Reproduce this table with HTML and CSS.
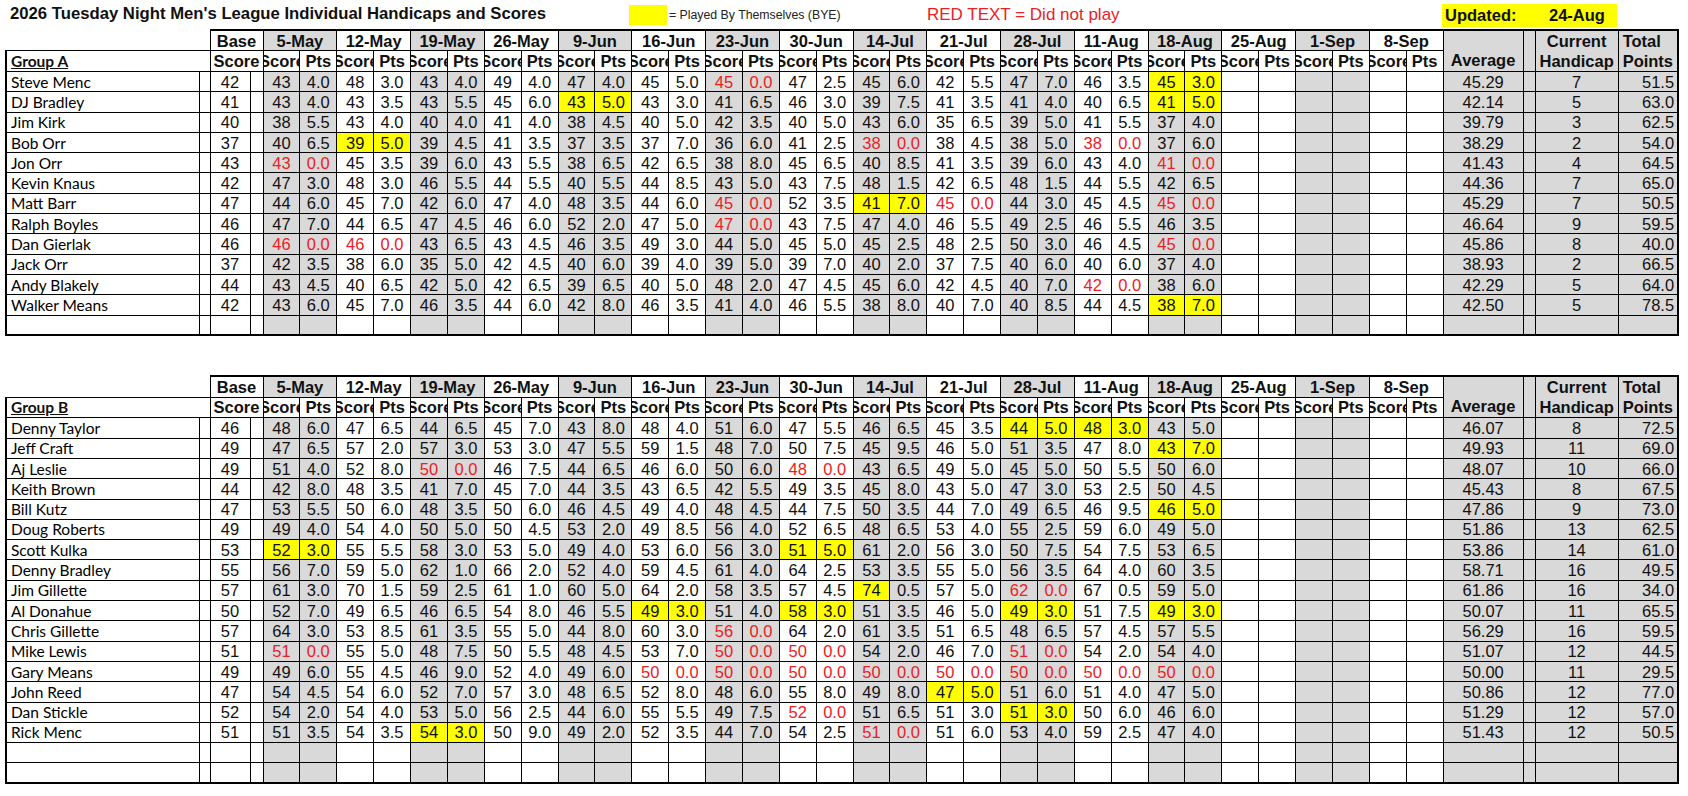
FILE: index.html
```html
<!DOCTYPE html>
<html lang="en">
<head>
<meta charset="utf-8">
<title>2026 Tuesday Night Men's League</title>
<link rel="stylesheet" href="styles.css">
</head>
<body>
<div class="top">
  <div class="title">2026 Tuesday Night Men's League Individual Handicaps and Scores</div>
  <div class="legend"><span class="swatch"></span><span>= Played By Themselves (BYE)</span></div>
  <div class="red-note">RED TEXT = Did not play</div>
  <div class="updated"><span class="upd-label">Updated:</span><span>24-Aug</span></div>
</div>

<table class="sheet">
<colgroup><col class="c-name"><col class="c-nar"><col class="c-base"><col class="c-gap"><col span="32" class="c-d"><col class="c-avg"><col class="c-gap2"><col class="c-hc"><col class="c-tot"></colgroup>
<tr class="h1"><th class="e" colspan="2"></th><th colspan="2">Base</th><th class="g" colspan="2">5-May</th><th colspan="2">12-May</th><th class="g" colspan="2">19-May</th><th colspan="2">26-May</th><th class="g" colspan="2">9-Jun</th><th colspan="2">16-Jun</th><th class="g" colspan="2">23-Jun</th><th colspan="2">30-Jun</th><th class="g" colspan="2">14-Jul</th><th colspan="2">21-Jul</th><th class="g" colspan="2">28-Jul</th><th colspan="2">11-Aug</th><th class="g" colspan="2">18-Aug</th><th colspan="2">25-Aug</th><th class="g" colspan="2">1-Sep</th><th colspan="2">8-Sep</th><th class="g avg" rowspan="2">Average</th><th class="g" rowspan="2"></th><th class="g" rowspan="2">Current<br>Handicap</th><th class="g tot" rowspan="2">Total<br>Points</th></tr>
<tr class="h2"><th class="grp" colspan="2">Group A</th><th colspan="2">Score</th><th>Score</th><th>Pts</th><th>Score</th><th>Pts</th><th>Score</th><th>Pts</th><th>Score</th><th>Pts</th><th>Score</th><th>Pts</th><th>Score</th><th>Pts</th><th>Score</th><th>Pts</th><th>Score</th><th>Pts</th><th>Score</th><th>Pts</th><th>Score</th><th>Pts</th><th>Score</th><th>Pts</th><th>Score</th><th>Pts</th><th>Score</th><th>Pts</th><th>Score</th><th>Pts</th><th>Score</th><th>Pts</th><th>Score</th><th>Pts</th></tr>
<tr class="d"><td>Steve Menc</td><td></td><td>42</td><td></td><td>43</td><td>4.0</td><td>48</td><td>3.0</td><td>43</td><td>4.0</td><td>49</td><td>4.0</td><td>47</td><td>4.0</td><td>45</td><td>5.0</td><td class="r">45</td><td class="r">0.0</td><td>47</td><td>2.5</td><td>45</td><td>6.0</td><td>42</td><td>5.5</td><td>47</td><td>7.0</td><td>46</td><td>3.5</td><td class="y">45</td><td class="y">3.0</td><td></td><td></td><td></td><td></td><td></td><td></td><td>45.29</td><td></td><td>7</td><td>51.5</td></tr>
<tr class="d"><td>DJ Bradley</td><td></td><td>41</td><td></td><td>43</td><td>4.0</td><td>43</td><td>3.5</td><td>43</td><td>5.5</td><td>45</td><td>6.0</td><td class="y">43</td><td class="y">5.0</td><td>43</td><td>3.0</td><td>41</td><td>6.5</td><td>46</td><td>3.0</td><td>39</td><td>7.5</td><td>41</td><td>3.5</td><td>41</td><td>4.0</td><td>40</td><td>6.5</td><td class="y">41</td><td class="y">5.0</td><td></td><td></td><td></td><td></td><td></td><td></td><td>42.14</td><td></td><td>5</td><td>63.0</td></tr>
<tr class="d"><td>Jim Kirk</td><td></td><td>40</td><td></td><td>38</td><td>5.5</td><td>43</td><td>4.0</td><td>40</td><td>4.0</td><td>41</td><td>4.0</td><td>38</td><td>4.5</td><td>40</td><td>5.0</td><td>42</td><td>3.5</td><td>40</td><td>5.0</td><td>43</td><td>6.0</td><td>35</td><td>6.5</td><td>39</td><td>5.0</td><td>41</td><td>5.5</td><td>37</td><td>4.0</td><td></td><td></td><td></td><td></td><td></td><td></td><td>39.79</td><td></td><td>3</td><td>62.5</td></tr>
<tr class="d"><td>Bob Orr</td><td></td><td>37</td><td></td><td>40</td><td>6.5</td><td class="y">39</td><td class="y">5.0</td><td>39</td><td>4.5</td><td>41</td><td>3.5</td><td>37</td><td>3.5</td><td>37</td><td>7.0</td><td>36</td><td>6.0</td><td>41</td><td>2.5</td><td class="r">38</td><td class="r">0.0</td><td>38</td><td>4.5</td><td>38</td><td>5.0</td><td class="r">38</td><td class="r">0.0</td><td>37</td><td>6.0</td><td></td><td></td><td></td><td></td><td></td><td></td><td>38.29</td><td></td><td>2</td><td>54.0</td></tr>
<tr class="d"><td>Jon Orr</td><td></td><td>43</td><td></td><td class="r">43</td><td class="r">0.0</td><td>45</td><td>3.5</td><td>39</td><td>6.0</td><td>43</td><td>5.5</td><td>38</td><td>6.5</td><td>42</td><td>6.5</td><td>38</td><td>8.0</td><td>45</td><td>6.5</td><td>40</td><td>8.5</td><td>41</td><td>3.5</td><td>39</td><td>6.0</td><td>43</td><td>4.0</td><td class="r">41</td><td class="r">0.0</td><td></td><td></td><td></td><td></td><td></td><td></td><td>41.43</td><td></td><td>4</td><td>64.5</td></tr>
<tr class="d"><td>Kevin Knaus</td><td></td><td>42</td><td></td><td>47</td><td>3.0</td><td>48</td><td>3.0</td><td>46</td><td>5.5</td><td>44</td><td>5.5</td><td>40</td><td>5.5</td><td>44</td><td>8.5</td><td>43</td><td>5.0</td><td>43</td><td>7.5</td><td>48</td><td>1.5</td><td>42</td><td>6.5</td><td>48</td><td>1.5</td><td>44</td><td>5.5</td><td>42</td><td>6.5</td><td></td><td></td><td></td><td></td><td></td><td></td><td>44.36</td><td></td><td>7</td><td>65.0</td></tr>
<tr class="d"><td>Matt Barr</td><td></td><td>47</td><td></td><td>44</td><td>6.0</td><td>45</td><td>7.0</td><td>42</td><td>6.0</td><td>47</td><td>4.0</td><td>48</td><td>3.5</td><td>44</td><td>6.0</td><td class="r">45</td><td class="r">0.0</td><td>52</td><td>3.5</td><td class="y">41</td><td class="y">7.0</td><td class="r">45</td><td class="r">0.0</td><td>44</td><td>3.0</td><td>45</td><td>4.5</td><td class="r">45</td><td class="r">0.0</td><td></td><td></td><td></td><td></td><td></td><td></td><td>45.29</td><td></td><td>7</td><td>50.5</td></tr>
<tr class="d"><td>Ralph Boyles</td><td></td><td>46</td><td></td><td>47</td><td>7.0</td><td>44</td><td>6.5</td><td>47</td><td>4.5</td><td>46</td><td>6.0</td><td>52</td><td>2.0</td><td>47</td><td>5.0</td><td class="r">47</td><td class="r">0.0</td><td>43</td><td>7.5</td><td>47</td><td>4.0</td><td>46</td><td>5.5</td><td>49</td><td>2.5</td><td>46</td><td>5.5</td><td>46</td><td>3.5</td><td></td><td></td><td></td><td></td><td></td><td></td><td>46.64</td><td></td><td>9</td><td>59.5</td></tr>
<tr class="d"><td>Dan Gierlak</td><td></td><td>46</td><td></td><td class="r">46</td><td class="r">0.0</td><td class="r">46</td><td class="r">0.0</td><td>43</td><td>6.5</td><td>43</td><td>4.5</td><td>46</td><td>3.5</td><td>49</td><td>3.0</td><td>44</td><td>5.0</td><td>45</td><td>5.0</td><td>45</td><td>2.5</td><td>48</td><td>2.5</td><td>50</td><td>3.0</td><td>46</td><td>4.5</td><td class="r">45</td><td class="r">0.0</td><td></td><td></td><td></td><td></td><td></td><td></td><td>45.86</td><td></td><td>8</td><td>40.0</td></tr>
<tr class="d"><td>Jack Orr</td><td></td><td>37</td><td></td><td>42</td><td>3.5</td><td>38</td><td>6.0</td><td>35</td><td>5.0</td><td>42</td><td>4.5</td><td>40</td><td>6.0</td><td>39</td><td>4.0</td><td>39</td><td>5.0</td><td>39</td><td>7.0</td><td>40</td><td>2.0</td><td>37</td><td>7.5</td><td>40</td><td>6.0</td><td>40</td><td>6.0</td><td>37</td><td>4.0</td><td></td><td></td><td></td><td></td><td></td><td></td><td>38.93</td><td></td><td>2</td><td>66.5</td></tr>
<tr class="d"><td>Andy Blakely</td><td></td><td>44</td><td></td><td>43</td><td>4.5</td><td>40</td><td>6.5</td><td>42</td><td>5.0</td><td>42</td><td>6.5</td><td>39</td><td>6.5</td><td>40</td><td>5.0</td><td>48</td><td>2.0</td><td>47</td><td>4.5</td><td>45</td><td>6.0</td><td>42</td><td>4.5</td><td>40</td><td>7.0</td><td class="r">42</td><td class="r">0.0</td><td>38</td><td>6.0</td><td></td><td></td><td></td><td></td><td></td><td></td><td>42.29</td><td></td><td>5</td><td>64.0</td></tr>
<tr class="d"><td>Walker Means</td><td></td><td>42</td><td></td><td>43</td><td>6.0</td><td>45</td><td>7.0</td><td>46</td><td>3.5</td><td>44</td><td>6.0</td><td>42</td><td>8.0</td><td>46</td><td>3.5</td><td>41</td><td>4.0</td><td>46</td><td>5.5</td><td>38</td><td>8.0</td><td>40</td><td>7.0</td><td>40</td><td>8.5</td><td>44</td><td>4.5</td><td class="y">38</td><td class="y">7.0</td><td></td><td></td><td></td><td></td><td></td><td></td><td>42.50</td><td></td><td>5</td><td>78.5</td></tr>
<tr class="d"><td></td><td></td><td></td><td></td><td></td><td></td><td></td><td></td><td></td><td></td><td></td><td></td><td></td><td></td><td></td><td></td><td></td><td></td><td></td><td></td><td></td><td></td><td></td><td></td><td></td><td></td><td></td><td></td><td></td><td></td><td></td><td></td><td></td><td></td><td></td><td></td><td></td><td></td><td></td><td></td></tr>
</table>

<table class="sheet sheet2">
<colgroup><col class="c-name"><col class="c-nar"><col class="c-base"><col class="c-gap"><col span="32" class="c-d"><col class="c-avg"><col class="c-gap2"><col class="c-hc"><col class="c-tot"></colgroup>
<tr class="h1"><th class="e" colspan="2"></th><th colspan="2">Base</th><th class="g" colspan="2">5-May</th><th colspan="2">12-May</th><th class="g" colspan="2">19-May</th><th colspan="2">26-May</th><th class="g" colspan="2">9-Jun</th><th colspan="2">16-Jun</th><th class="g" colspan="2">23-Jun</th><th colspan="2">30-Jun</th><th class="g" colspan="2">14-Jul</th><th colspan="2">21-Jul</th><th class="g" colspan="2">28-Jul</th><th colspan="2">11-Aug</th><th class="g" colspan="2">18-Aug</th><th colspan="2">25-Aug</th><th class="g" colspan="2">1-Sep</th><th colspan="2">8-Sep</th><th class="g avg" rowspan="2">Average</th><th class="g" rowspan="2"></th><th class="g" rowspan="2">Current<br>Handicap</th><th class="g tot" rowspan="2">Total<br>Points</th></tr>
<tr class="h2"><th class="grp" colspan="2">Group B</th><th colspan="2">Score</th><th>Score</th><th>Pts</th><th>Score</th><th>Pts</th><th>Score</th><th>Pts</th><th>Score</th><th>Pts</th><th>Score</th><th>Pts</th><th>Score</th><th>Pts</th><th>Score</th><th>Pts</th><th>Score</th><th>Pts</th><th>Score</th><th>Pts</th><th>Score</th><th>Pts</th><th>Score</th><th>Pts</th><th>Score</th><th>Pts</th><th>Score</th><th>Pts</th><th>Score</th><th>Pts</th><th>Score</th><th>Pts</th><th>Score</th><th>Pts</th></tr>
<tr class="d"><td>Denny Taylor</td><td></td><td>46</td><td></td><td>48</td><td>6.0</td><td>47</td><td>6.5</td><td>44</td><td>6.5</td><td>45</td><td>7.0</td><td>43</td><td>8.0</td><td>48</td><td>4.0</td><td>51</td><td>6.0</td><td>47</td><td>5.5</td><td>46</td><td>6.5</td><td>45</td><td>3.5</td><td class="y">44</td><td class="y">5.0</td><td class="y">48</td><td class="y">3.0</td><td>43</td><td>5.0</td><td></td><td></td><td></td><td></td><td></td><td></td><td>46.07</td><td></td><td>8</td><td>72.5</td></tr>
<tr class="d"><td>Jeff Craft</td><td></td><td>49</td><td></td><td>47</td><td>6.5</td><td>57</td><td>2.0</td><td>57</td><td>3.0</td><td>53</td><td>3.0</td><td>47</td><td>5.5</td><td>59</td><td>1.5</td><td>48</td><td>7.0</td><td>50</td><td>7.5</td><td>45</td><td>9.5</td><td>46</td><td>5.0</td><td>51</td><td>3.5</td><td>47</td><td>8.0</td><td class="y">43</td><td class="y">7.0</td><td></td><td></td><td></td><td></td><td></td><td></td><td>49.93</td><td></td><td>11</td><td>69.0</td></tr>
<tr class="d"><td>Aj Leslie</td><td></td><td>49</td><td></td><td>51</td><td>4.0</td><td>52</td><td>8.0</td><td class="r">50</td><td class="r">0.0</td><td>46</td><td>7.5</td><td>44</td><td>6.5</td><td>46</td><td>6.0</td><td>50</td><td>6.0</td><td class="r">48</td><td class="r">0.0</td><td>43</td><td>6.5</td><td>49</td><td>5.0</td><td>45</td><td>5.0</td><td>50</td><td>5.5</td><td>50</td><td>6.0</td><td></td><td></td><td></td><td></td><td></td><td></td><td>48.07</td><td></td><td>10</td><td>66.0</td></tr>
<tr class="d"><td>Keith Brown</td><td></td><td>44</td><td></td><td>42</td><td>8.0</td><td>48</td><td>3.5</td><td>41</td><td>7.0</td><td>45</td><td>7.0</td><td>44</td><td>3.5</td><td>43</td><td>6.5</td><td>42</td><td>5.5</td><td>49</td><td>3.5</td><td>45</td><td>8.0</td><td>43</td><td>5.0</td><td>47</td><td>3.0</td><td>53</td><td>2.5</td><td>50</td><td>4.5</td><td></td><td></td><td></td><td></td><td></td><td></td><td>45.43</td><td></td><td>8</td><td>67.5</td></tr>
<tr class="d"><td>Bill Kutz</td><td></td><td>47</td><td></td><td>53</td><td>5.5</td><td>50</td><td>6.0</td><td>48</td><td>3.5</td><td>50</td><td>6.0</td><td>46</td><td>4.5</td><td>49</td><td>4.0</td><td>48</td><td>4.5</td><td>44</td><td>7.5</td><td>50</td><td>3.5</td><td>44</td><td>7.0</td><td>49</td><td>6.5</td><td>46</td><td>9.5</td><td class="y">46</td><td class="y">5.0</td><td></td><td></td><td></td><td></td><td></td><td></td><td>47.86</td><td></td><td>9</td><td>73.0</td></tr>
<tr class="d"><td>Doug Roberts</td><td></td><td>49</td><td></td><td>49</td><td>4.0</td><td>54</td><td>4.0</td><td>50</td><td>5.0</td><td>50</td><td>4.5</td><td>53</td><td>2.0</td><td>49</td><td>8.5</td><td>56</td><td>4.0</td><td>52</td><td>6.5</td><td>48</td><td>6.5</td><td>53</td><td>4.0</td><td>55</td><td>2.5</td><td>59</td><td>6.0</td><td>49</td><td>5.0</td><td></td><td></td><td></td><td></td><td></td><td></td><td>51.86</td><td></td><td>13</td><td>62.5</td></tr>
<tr class="d"><td>Scott Kulka</td><td></td><td>53</td><td></td><td class="y">52</td><td class="y">3.0</td><td>55</td><td>5.5</td><td>58</td><td>3.0</td><td>53</td><td>5.0</td><td>49</td><td>4.0</td><td>53</td><td>6.0</td><td>56</td><td>3.0</td><td class="y">51</td><td class="y">5.0</td><td>61</td><td>2.0</td><td>56</td><td>3.0</td><td>50</td><td>7.5</td><td>54</td><td>7.5</td><td>53</td><td>6.5</td><td></td><td></td><td></td><td></td><td></td><td></td><td>53.86</td><td></td><td>14</td><td>61.0</td></tr>
<tr class="d"><td>Denny Bradley</td><td></td><td>55</td><td></td><td>56</td><td>7.0</td><td>59</td><td>5.0</td><td>62</td><td>1.0</td><td>66</td><td>2.0</td><td>52</td><td>4.0</td><td>59</td><td>4.5</td><td>61</td><td>4.0</td><td>64</td><td>2.5</td><td>53</td><td>3.5</td><td>55</td><td>5.0</td><td>56</td><td>3.5</td><td>64</td><td>4.0</td><td>60</td><td>3.5</td><td></td><td></td><td></td><td></td><td></td><td></td><td>58.71</td><td></td><td>16</td><td>49.5</td></tr>
<tr class="d"><td>Jim Gillette</td><td></td><td>57</td><td></td><td>61</td><td>3.0</td><td>70</td><td>1.5</td><td>59</td><td>2.5</td><td>61</td><td>1.0</td><td>60</td><td>5.0</td><td>64</td><td>2.0</td><td>58</td><td>3.5</td><td>57</td><td>4.5</td><td class="y">74</td><td>0.5</td><td>57</td><td>5.0</td><td class="r">62</td><td class="r">0.0</td><td>67</td><td>0.5</td><td>59</td><td>5.0</td><td></td><td></td><td></td><td></td><td></td><td></td><td>61.86</td><td></td><td>16</td><td>34.0</td></tr>
<tr class="d"><td>Al Donahue</td><td></td><td>50</td><td></td><td>52</td><td>7.0</td><td>49</td><td>6.5</td><td>46</td><td>6.5</td><td>54</td><td>8.0</td><td>46</td><td>5.5</td><td class="y">49</td><td class="y">3.0</td><td>51</td><td>4.0</td><td class="y">58</td><td class="y">3.0</td><td>51</td><td>3.5</td><td>46</td><td>5.0</td><td class="y">49</td><td class="y">3.0</td><td>51</td><td>7.5</td><td class="y">49</td><td class="y">3.0</td><td></td><td></td><td></td><td></td><td></td><td></td><td>50.07</td><td></td><td>11</td><td>65.5</td></tr>
<tr class="d"><td>Chris Gillette</td><td></td><td>57</td><td></td><td>64</td><td>3.0</td><td>53</td><td>8.5</td><td>61</td><td>3.5</td><td>55</td><td>5.0</td><td>44</td><td>8.0</td><td>60</td><td>3.0</td><td class="r">56</td><td class="r">0.0</td><td>64</td><td>2.0</td><td>61</td><td>3.5</td><td>51</td><td>6.5</td><td>48</td><td>6.5</td><td>57</td><td>4.5</td><td>57</td><td>5.5</td><td></td><td></td><td></td><td></td><td></td><td></td><td>56.29</td><td></td><td>16</td><td>59.5</td></tr>
<tr class="d"><td>Mike Lewis</td><td></td><td>51</td><td></td><td class="r">51</td><td class="r">0.0</td><td>55</td><td>5.0</td><td>48</td><td>7.5</td><td>50</td><td>5.5</td><td>48</td><td>4.5</td><td>53</td><td>7.0</td><td class="r">50</td><td class="r">0.0</td><td class="r">50</td><td class="r">0.0</td><td>54</td><td>2.0</td><td>46</td><td>7.0</td><td class="r">51</td><td class="r">0.0</td><td>54</td><td>2.0</td><td>54</td><td>4.0</td><td></td><td></td><td></td><td></td><td></td><td></td><td>51.07</td><td></td><td>12</td><td>44.5</td></tr>
<tr class="d"><td>Gary Means</td><td></td><td>49</td><td></td><td>49</td><td>6.0</td><td>55</td><td>4.5</td><td>46</td><td>9.0</td><td>52</td><td>4.0</td><td>49</td><td>6.0</td><td class="r">50</td><td class="r">0.0</td><td class="r">50</td><td class="r">0.0</td><td class="r">50</td><td class="r">0.0</td><td class="r">50</td><td class="r">0.0</td><td class="r">50</td><td class="r">0.0</td><td class="r">50</td><td class="r">0.0</td><td class="r">50</td><td class="r">0.0</td><td class="r">50</td><td class="r">0.0</td><td></td><td></td><td></td><td></td><td></td><td></td><td>50.00</td><td></td><td>11</td><td>29.5</td></tr>
<tr class="d"><td>John Reed</td><td></td><td>47</td><td></td><td>54</td><td>4.5</td><td>54</td><td>6.0</td><td>52</td><td>7.0</td><td>57</td><td>3.0</td><td>48</td><td>6.5</td><td>52</td><td>8.0</td><td>48</td><td>6.0</td><td>55</td><td>8.0</td><td>49</td><td>8.0</td><td class="y">47</td><td class="y">5.0</td><td>51</td><td>6.0</td><td>51</td><td>4.0</td><td>47</td><td>5.0</td><td></td><td></td><td></td><td></td><td></td><td></td><td>50.86</td><td></td><td>12</td><td>77.0</td></tr>
<tr class="d"><td>Dan Stickle</td><td></td><td>52</td><td></td><td>54</td><td>2.0</td><td>54</td><td>4.0</td><td>53</td><td>5.0</td><td>56</td><td>2.5</td><td>44</td><td>6.0</td><td>55</td><td>5.5</td><td>49</td><td>7.5</td><td class="r">52</td><td class="r">0.0</td><td>51</td><td>6.5</td><td>51</td><td>3.0</td><td class="y">51</td><td class="y">3.0</td><td>50</td><td>6.0</td><td>46</td><td>6.0</td><td></td><td></td><td></td><td></td><td></td><td></td><td>51.29</td><td></td><td>12</td><td>57.0</td></tr>
<tr class="d"><td>Rick Menc</td><td></td><td>51</td><td></td><td>51</td><td>3.5</td><td>54</td><td>3.5</td><td class="y">54</td><td class="y">3.0</td><td>50</td><td>9.0</td><td>49</td><td>2.0</td><td>52</td><td>3.5</td><td>44</td><td>7.0</td><td>54</td><td>2.5</td><td class="r">51</td><td class="r">0.0</td><td>51</td><td>6.0</td><td>53</td><td>4.0</td><td>59</td><td>2.5</td><td>47</td><td>4.0</td><td></td><td></td><td></td><td></td><td></td><td></td><td>51.43</td><td></td><td>12</td><td>50.5</td></tr>
<tr class="d"><td></td><td></td><td></td><td></td><td></td><td></td><td></td><td></td><td></td><td></td><td></td><td></td><td></td><td></td><td></td><td></td><td></td><td></td><td></td><td></td><td></td><td></td><td></td><td></td><td></td><td></td><td></td><td></td><td></td><td></td><td></td><td></td><td></td><td></td><td></td><td></td><td></td><td></td><td></td><td></td></tr>
<tr class="d"><td></td><td></td><td></td><td></td><td></td><td></td><td></td><td></td><td></td><td></td><td></td><td></td><td></td><td></td><td></td><td></td><td></td><td></td><td></td><td></td><td></td><td></td><td></td><td></td><td></td><td></td><td></td><td></td><td></td><td></td><td></td><td></td><td></td><td></td><td></td><td></td><td></td><td></td><td></td><td></td></tr>
</table>
</body>
</html>
```

FILE: styles.css
```css
html, body {
  margin: 0;
  padding: 0;
  background: #ffffff;
}

body {
  font-family: "Liberation Sans", Arial, sans-serif;
  color: #000000;
  width: 1688px;
  height: 796px;
  overflow: hidden;
}

/* ---------- top strip ---------- */
.top {
  display: flex;
  align-items: flex-start;
  height: 29px;
}

.title {
  box-sizing: border-box;
  width: 629px;
  padding: 4px 0 0 10px;
  font-size: 16.7px;
  font-weight: bold;
  line-height: 20px;
  white-space: nowrap;
  color: #111;
}

.legend {
  display: flex;
  align-items: center;
  width: 298px;
  margin-top: 5px;
  font-size: 12.3px;
  line-height: 20px;
  color: #222;
}

.swatch {
  width: 38px;
  height: 20px;
  margin-right: 2px;
  background: #ffff00;
}

.red-note {
  width: 515px;
  padding-top: 5px;
  font-size: 17px;
  line-height: 20px;
  color: #ec2024;
  white-space: nowrap;
}

.updated {
  display: flex;
  box-sizing: border-box;
  width: 175px;
  height: 23px;
  margin-top: 4px;
  padding-left: 3px;
  background: #ffff00;
  font-size: 16.5px;
  font-weight: bold;
  line-height: 23px;
  color: #111;
}

.upd-label {
  width: 104px;
}

/* ---------- sheet tables ---------- */
.sheet {
  margin-left: 5px;
  border-collapse: collapse;
  table-layout: fixed;
  width: 1672px;
  border: 2px solid #000;
}

.sheet2 {
  margin-top: 39px;
}

.c-name { width: 193px; }
.c-nar  { width: 11px; }
.c-base { width: 40px; }
.c-gap  { width: 13px; }
.c-d    { width: 36.875px; }
.c-avg  { width: 80px; }
.c-gap2 { width: 12px; }
.c-hc   { width: 83px; }
.c-tot  { width: 60px; }

.sheet tr {
  height: 20.3px;
}

.sheet th,
.sheet td {
  border: 1px solid #000;
  padding: 0;
  font-size: 16.5px;
  line-height: 18px;
  text-align: center;
  vertical-align: middle;
  white-space: nowrap;
  overflow: hidden;
}

.sheet th {
  font-weight: bold;
  color: #111;
  background: #ffffff;
}

.sheet th.g {
  background: #d9d9d9;
}

.sheet th.e {
  border-top: hidden;
  border-left: hidden;
}

.sheet th.avg {
  vertical-align: bottom;
  padding-bottom: 1px;
}

.sheet th.tot {
  text-align: left;
  padding-left: 4px;
}

.sheet .h1 th[rowspan] {
  line-height: 20px;
}

.sheet th.grp {
  text-align: left;
  padding-left: 4px;
  font-family: Lato, "Noto Sans", sans-serif;
  font-size: 15.5px;
  text-decoration: underline;
}

/* clipped "Score" headers, overflowing on both sides */
.sheet .h2 th:nth-child(2n+3) {
  text-indent: -4.5px;
}

/* data rows */
.sheet .d td {
  color: #111;
}

.sheet .d td:first-child {
  text-align: left;
  padding-left: 4px;
  font-family: Lato, "Noto Sans", sans-serif;
  font-size: 15.5px;
  color: #000;
}

.sheet .d td:last-child {
  text-align: right;
  padding-right: 3px;
}

.sheet .d td:nth-child(4n+5),
.sheet .d td:nth-child(4n+6),
.sheet .d td:nth-child(n+37) {
  background: #d9d9d9;
}

.sheet .d td.y {
  background: #ffff00;
}

.sheet .d td.r {
  color: #ec2024;
}
```
